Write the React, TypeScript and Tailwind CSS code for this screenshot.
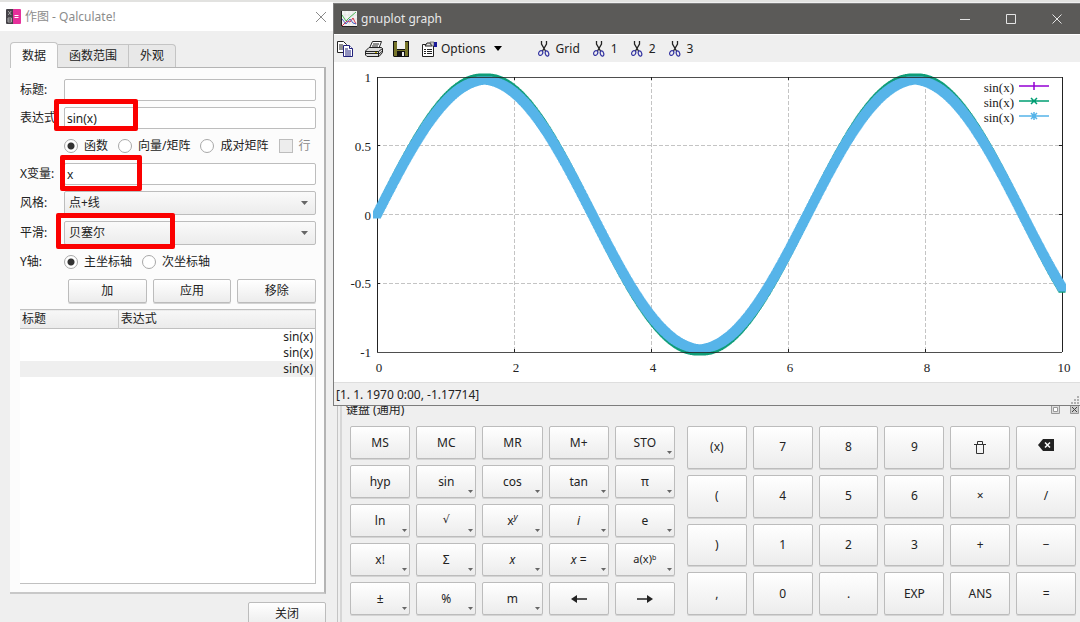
import clsx from 'clsx';
import { ReactNode } from 'react';

const keyClasses =
  'relative flex items-center justify-center rounded-xs border border-[#bcbcbc] bg-linear-to-b from-white to-[#ececec] text-xs text-[#222] shadow-[0_1px_0_#d4d4d4]';

export default function App() {
  return (
    <div className="grid h-screen grid-cols-[333px_minmax(0,1fr)] overflow-hidden border-t-2 border-[#e2e2e0] bg-[#efefef] font-['Noto_Sans','Noto_Sans_CJK_SC',sans-serif] text-xs text-[#222]">
      <PlotDialog />
      <div className="flex min-w-0 flex-col pt-px">
        <GnuplotWindow />
        <Keypad />
      </div>
    </div>
  );
}

/* ---------- plot dialog ---------- */

function PlotDialog() {
  return (
    <section className="flex min-h-0 flex-col">
      <header className="flex h-[29px] shrink-0 items-center gap-1 bg-white pl-1.5 pr-1.5 text-[#8c8c8c]">
        <QalculateLogo />
        <h1>作图 - Qalculate!</h1>
        <button aria-label="Close" className="ml-auto">
          <svg width="12" height="12" viewBox="0 0 12 12" stroke="#8a8a8a" fill="none">
            <path d="M1 1l10 10M11 1L1 11" />
          </svg>
        </button>
      </header>
      <div className="flex min-h-0 flex-1 flex-col pl-2.5 pr-[7px] pt-[11px]">
        <div className="z-10 flex items-end">
          <button className="-mb-px h-[26px] rounded-t-sm border border-b-0 border-[#c4c4c4] bg-[#fcfcfc] px-[11px]">
            数据
          </button>
          <button className="h-[23px] border border-b-0 border-l-0 border-[#c4c4c4] bg-[#e8e8e8] px-[11px]">
            函数范围
          </button>
          <button className="h-[23px] rounded-tr-sm border border-b-0 border-l-0 border-[#c4c4c4] bg-[#e8e8e8] px-[11px]">
            外观
          </button>
        </div>
        <form className="flex min-h-0 flex-1 flex-col gap-1.5 border-b-2 border-r-2 border-t border-b-[#c8c8c8] border-r-[#b4b4b4] border-t-[#b4b4b4] bg-[#fcfcfc] pb-2 pl-2.5 pr-2 pt-[11px]">
          <Field id="title" label="标题:">
            <TextInput id="title" value="" />
          </Field>
          <Field id="expression" label="表达式:">
            <TextInput id="expression" value="sin(x)" />
            <Highlight className="-left-2.5 -top-2 h-8 w-[84px]" />
          </Field>
          <div className="ml-11 flex h-[22px] items-center gap-2.5">
            <Choice name="kind" label="函数" checked />
            <Choice name="kind" label="向量/矩阵" />
            <Choice name="kind" label="成对矩阵" />
            <label className="flex items-center gap-1.5 text-[#8c8c8c]">
              <input
                type="checkbox"
                disabled
                className="size-3.5 appearance-none border border-[#bdbdbd] bg-[#ededed]"
              />
              行
            </label>
          </div>
          <Field id="variable" label="X变量:">
            <TextInput id="variable" value="x" />
            <Highlight className="-left-1 -top-2 h-9 w-[82px]" />
          </Field>
          <Field id="style" label="风格:">
            <Select id="style" value="点+线" />
          </Field>
          <Field id="smooth" label="平滑:">
            <Select id="smooth" value="贝塞尔" />
            <Highlight className="-left-2 -top-2 h-9 w-[119px]" />
          </Field>
          <div className="flex h-[22px] items-center">
            <span className="w-11">Y轴:</span>
            <div className="flex gap-2.5">
              <Choice name="axis" label="主坐标轴" checked />
              <Choice name="axis" label="次坐标轴" />
            </div>
          </div>
          <div className="ml-12 grid h-6 grid-cols-3 gap-1.5">
            <button type="button" className={keyClasses}>加</button>
            <button type="button" className={keyClasses}>应用</button>
            <button type="button" className={keyClasses}>移除</button>
          </div>
          <div className="min-h-0 flex-1 border-b border-r border-[#c0c0c0] bg-white">
            <table className="w-full border-collapse">
              <thead>
                <tr className="border-b border-t border-[#c0c0c0] bg-linear-to-b from-[#f7f7f7] to-[#ebebeb] text-left">
                  <th className="w-1/3 border-r border-[#c8c8c8] px-0.5 font-normal leading-[18px]">标题</th>
                  <th className="px-0.5 font-normal leading-[18px]">表达式</th>
                </tr>
              </thead>
              <tbody>
                {[0, 1, 2].map((i) => (
                  <tr key={i} className={clsx('text-right leading-4', i === 2 && 'bg-[#efefef]')}>
                    <td className="p-0" />
                    <td className="p-0 pr-0.5">sin(x)</td>
                  </tr>
                ))}
              </tbody>
            </table>
          </div>
        </form>
        <button className={clsx(keyClasses, '-mb-1 ml-auto mt-2 h-6 w-[78px] shrink-0')}>关闭</button>
      </div>
    </section>
  );
}

function Field({ id, label, children }: { id: string; label: string; children: ReactNode }) {
  return (
    <div className="flex items-center">
      <label htmlFor={id} className="w-11 shrink-0 whitespace-nowrap">
        {label}
      </label>
      <div className="relative flex min-w-0 flex-1">{children}</div>
    </div>
  );
}

function TextInput({ id, value }: { id: string; value: string }) {
  return (
    <input
      id={id}
      type="text"
      defaultValue={value}
      className="h-[22px] w-full rounded-xs border border-[#bdbdbd] bg-white px-0.5"
    />
  );
}

function Select({ id, value }: { id: string; value: string }) {
  return (
    <>
      <select
        id={id}
        className="h-6 w-full appearance-none rounded-xs border border-[#bdbdbd] bg-linear-to-b from-[#fafafa] to-[#ececec] px-1"
      >
        <option>{value}</option>
      </select>
      <svg className="pointer-events-none absolute right-2 top-2.5" width="7" height="4" viewBox="0 0 7 4">
        <path d="M0 0h7L3.5 4z" fill="#666" />
      </svg>
    </>
  );
}

function Choice({ name, label, checked }: { name: string; label: string; checked?: boolean }) {
  return (
    <label className="flex items-center gap-1.5 whitespace-nowrap">
      <input
        type="radio"
        name={name}
        defaultChecked={checked}
        className="size-3.5 appearance-none rounded-full border border-[#a8a8a8] bg-white checked:bg-[radial-gradient(circle,#333_3px,white_4px)]"
      />
      {label}
    </label>
  );
}

function Highlight({ className }: { className: string }) {
  return <div className={clsx('pointer-events-none absolute z-10 rounded-xs border-5 border-[#fb0000]', className)} />;
}

function QalculateLogo() {
  return (
    <svg width="15" height="15" viewBox="0 0 15 15" fill="none">
      <rect width="8" height="15" rx="1" fill="#454248" />
      <rect x="7" width="8" height="15" rx="1" fill="#e6309b" />
      <path d="M2.2 2l3 4M5.2 2l-3 4M2 9h3.500v4H2zM2 11h3.500" stroke="#bbb" strokeWidth=".8" />
      <path d="M8.500 6.500h4M8.500 8.500h4" stroke="#fff" />
    </svg>
  );
}

/* ---------- gnuplot window ---------- */

function GnuplotWindow() {
  return (
    <section className="relative z-10 border border-[#7d7d7d] border-r-0 bg-[#efefef]">
      <header className="flex h-[30px] items-center bg-[#5b5a58] pl-[7px] text-[#e8e8e8]">
        <GraphLogo />
        <h2 className="ml-1 flex-1">gnuplot graph</h2>
        <WindowButton label="Minimize" d="M0 5.500h10" />
        <WindowButton label="Maximize" d="M.5.500h9v9h-9z" />
        <WindowButton label="Close" d="M.5.500l9 9M9.500.500l-9 9" />
      </header>
      <div className="flex h-7 items-center border-t border-white pl-0.5">
        <button aria-label="Copy" className="mr-[11px]">
          <CopyIcon />
        </button>
        <button aria-label="Print" className="mr-2.5">
          <PrintIcon />
        </button>
        <button aria-label="Save" className="mr-3">
          <SaveIcon />
        </button>
        <button className="flex items-center gap-1">
          <OptionsIcon />
          <span className="mr-1">Options</span>
          <svg width="8" height="5" viewBox="0 0 8 5">
            <path d="M0 0h8L4 5z" fill="#000" />
          </svg>
        </button>
        <div className="ml-9 flex gap-[13px]">
          {['Grid', '1', '2', '3'].map((label) => (
            <button key={label} className="flex items-center gap-1.5">
              <ScissorsIcon />
              {label}
            </button>
          ))}
        </div>
      </div>
      <Chart />
      <footer className="relative h-[23px] border-t border-[#dedede] px-0.5 leading-[23px]">
        [1. 1. 1970 0:00, -1.17714]
        <svg className="absolute bottom-0 right-0" width="9" height="9" viewBox="0 0 9 9" fill="#b0b0b0">
          <path d="M6 0h2v2H6zM3 3h2v2H3zM6 3h2v2H6zM0 6h2v2H0zM3 6h2v2H3zM6 6h2v2H6z" />
        </svg>
      </footer>
    </section>
  );
}

function WindowButton({ label, d }: { label: string; d: string }) {
  return (
    <button aria-label={label} className="flex h-full w-[46px] items-center justify-center">
      <svg width="10" height="10" viewBox="0 0 10 10" fill="none" stroke="#e4e4e4">
        <path d={d} />
      </svg>
    </button>
  );
}

const LEFT = 43;
const TOP = 15;
const PLOT_WIDTH = 685;
const PLOT_HEIGHT = 275;

const toX = (x: number) => LEFT + (x / 10) * PLOT_WIDTH;
const toY = (y: number) => TOP + ((1 - y) / 2) * PLOT_HEIGHT;

// One square marker per sample, dense enough to read as a thick stroke
function markers(amplitude: number, size: number) {
  let d = '';
  for (let i = 0; i <= 1000; i++) {
    const x = i / 100;
    const left = toX(x) - size / 2;
    const top = toY(amplitude * Math.sin(x)) - size / 2;
    d += `M${left.toFixed(1)} ${top.toFixed(1)}h${size}v${size}h${-size}z`;
  }
  return d;
}

const GREEN_CURVE = markers(1, 7);
const BLUE_CURVE = markers(0.975, 8);

const LEGEND = [
  { color: '#9400d3', mark: 'M-4 0h8M0-4v8' },
  { color: '#009e73', mark: 'M-3-3l6 6M3-3l-6 6' },
  { color: '#56b4e9', mark: 'M-3-3l6 6M3-3l-6 6M-4 0h8M0-4v8' },
];

function Chart() {
  return (
    <svg
      viewBox="0 0 746 320"
      className="block h-auto w-full bg-white font-['Liberation_Serif',serif] text-[13px]"
      role="img"
      aria-label="sin(x)"
    >
      <g stroke="#c4c4c4" strokeDasharray="4 2" shapeRendering="crispEdges">
        {[2, 4, 6, 8].map((x) => (
          <line key={x} x1={toX(x)} x2={toX(x)} y1={TOP} y2={TOP + PLOT_HEIGHT} />
        ))}
        {[0.5, 0, -0.5].map((y) => (
          <line key={y} x1={LEFT} x2={LEFT + PLOT_WIDTH} y1={toY(y)} y2={toY(y)} />
        ))}
      </g>
      <g stroke="#222" shapeRendering="crispEdges">
        {[2, 4, 6, 8].map((x) => (
          <path key={x} d={`M${toX(x)} ${TOP}v3M${toX(x)} ${TOP + PLOT_HEIGHT}v-3`} />
        ))}
        {[0.5, 0, -0.5].map((y) => (
          <path key={y} d={`M${LEFT} ${toY(y)}h3M${LEFT + PLOT_WIDTH} ${toY(y)}h-3`} />
        ))}
        <path d={`M${LEFT} ${TOP}v${PLOT_HEIGHT}M${LEFT + PLOT_WIDTH} ${TOP}v${PLOT_HEIGHT}`} />
      </g>
      <path d={GREEN_CURVE} fill="#0f9d78" />
      <path d={BLUE_CURVE} fill="#56b4e9" />
      <path
        d={`M${LEFT} ${TOP}h${PLOT_WIDTH}M${LEFT} ${TOP + PLOT_HEIGHT}h${PLOT_WIDTH}`}
        stroke="#222"
        strokeOpacity=".8"
        shapeRendering="crispEdges"
      />
      <g fill="#222" textAnchor="end">
        {[1, 0.5, 0, -0.5, -1].map((y) => (
          <text key={y} x={LEFT - 6} y={toY(y) + 5}>
            {y}
          </text>
        ))}
      </g>
      <g fill="#222" textAnchor="middle">
        {[0, 2, 4, 6, 8, 10].map((x) => (
          <text key={x} x={toX(x) + 2} y="310">
            {x}
          </text>
        ))}
      </g>
      {LEGEND.map(({ color, mark }, i) => (
        <g key={color}>
          <text x="680" y={30 + i * 15} textAnchor="end" fill="#222">
            sin(x)
          </text>
          <g transform={`translate(700 ${24 + i * 15})`} stroke={color} strokeWidth="1.500">
            <path d={`M-15 0h30${mark}`} />
          </g>
        </g>
      ))}
    </svg>
  );
}

function GraphLogo() {
  return (
    <svg width="16" height="16" viewBox="0 0 16 16" fill="none">
      <rect width="16" height="16" fill="#f4f4f4" />
      <path d="M4 0v16M8 0v16M12 0v16M0 4h16M0 8h16M0 12h16" stroke="#ddd" strokeWidth=".6" />
      <path d="M1 4l4 6 3-3 7-6" stroke="#4cbb5a" />
      <path d="M1 15l5-5 3 1 3-4 3 6" stroke="#d8344c" />
      <path d="M1 8l4 5 4-5 3 4 3 1" stroke="#4a63c8" />
      <path d="M.5 0v15.500H16" stroke="#222" />
    </svg>
  );
}

function CopyIcon() {
  return (
    <svg width="18" height="18" viewBox="0 0 18 18" fill="#fff">
      <path d="M1.500 1.500h6l3 3v8h-9z" stroke="#222" />
      <path d="M3 5h4M3 7h5M3 9h5" stroke="#222" />
      <path d="M7.500 5.500h6l3 3v8h-9z" stroke="#22227c" />
      <path d="M13.500 5.500v3h3M9 9h3M9 11h6M9 13h6M9 15h6" stroke="#22227c" />
    </svg>
  );
}

function PrintIcon() {
  return (
    <svg width="18" height="18" viewBox="0 0 18 18" fill="#fff" stroke="#222" strokeLinejoin="round">
      <path d="M4.500 8L7.500 1.500h9L14 8z" />
      <path d="M8 4h6M7 6h6" />
      <path d="M.5 11L4 7.500h12.500l1 1v4L14 16.500H2L.5 15z" fill="#ddd" />
      <path d="M.5 11.500h13l4-3M1 13.500h13M13.500 11.500v5M14 14l3.500-3" fill="none" />
      <path d="M10 12.500h2" stroke="#b8a800" />
    </svg>
  );
}

function SaveIcon() {
  return (
    <svg width="16" height="16" viewBox="0 0 16 16">
      <path d="M0 0h16v16H1l-1-1z" fill="#111" />
      <path d="M1 1h3v8h8V1h3v14H1z" fill="#77752a" />
      <path d="M4 0h8v8H4z" fill="#f2f2f2" />
      <path d="M4 10h8v6H4z" fill="#111" />
      <path d="M9 11h2v4H9z" fill="#eee" />
    </svg>
  );
}

function OptionsIcon() {
  return (
    <svg width="16" height="16" viewBox="0 0 16 16" fill="none">
      <path d="M1.500 3.500h11v12h-11z" fill="#fff" stroke="#222" />
      <path d="M4 5l2-3h3l2 3z" fill="#ddd" stroke="#222" />
      <path d="M3 8.500h2M6 8.500h5M3 10.500h2M6 10.500h5M3 12.500h2M6 12.500h5" stroke="#222" />
      <path d="M9 1h4v4h-2z" fill="#ccc" stroke="#444" strokeWidth=".6" />
      <path d="M13 1h3v5h-3z" fill="#1c1c9c" />
    </svg>
  );
}

function ScissorsIcon() {
  return (
    <svg width="12" height="16" viewBox="0 0 12 16" fill="none">
      <path d="M3.500 0v3l4 7M8.500 0v3l-4 7" stroke="#222" strokeWidth="1.300" />
      <ellipse cx="2.700" cy="12" rx="1.900" ry="2.500" transform="rotate(30 2.700 12)" stroke="#3030a0" strokeWidth="1.200" />
      <ellipse cx="9" cy="12.500" rx="1.700" ry="2.700" transform="rotate(-15 9 12.500)" stroke="#3030a0" strokeWidth="1.200" />
    </svg>
  );
}

/* ---------- keypad ---------- */

type Key = { label: ReactNode; name?: string; menu?: boolean };

const FUNCTION_KEYS: Key[] = [
  { label: 'MS' },
  { label: 'MC' },
  { label: 'MR' },
  { label: 'M+' },
  { label: 'STO', menu: true },
  { label: 'hyp' },
  { label: 'sin', menu: true },
  { label: 'cos', menu: true },
  { label: 'tan', menu: true },
  { label: 'π', menu: true },
  { label: 'ln', menu: true },
  { label: <span className="font-['DejaVu_Sans',sans-serif] text-[11px]">√</span>, menu: true },
  { label: <span>x<sup className="text-[9px] italic">y</sup></span>, menu: true },
  { label: <i>i</i>, menu: true },
  { label: 'e', menu: true },
  { label: 'x!', menu: true },
  { label: 'Σ', menu: true },
  { label: <i>x</i>, menu: true },
  { label: <span><i>x</i> =</span>, menu: true },
  { label: <span className="text-[11px]">a(x)<sup className="text-[7px]">b</sup></span>, menu: true },
  { label: '±', menu: true },
  { label: '%', menu: true },
  { label: 'm', menu: true },
  { label: <ArrowIcon />, name: 'Left' },
  { label: <ArrowIcon className="rotate-180" />, name: 'Right' },
];

const NUMBER_KEYS: Key[] = [
  ...['(x)', '7', '8', '9'].map((label) => ({ label })),
  { label: <TrashIcon />, name: 'Clear' },
  { label: <BackspaceIcon />, name: 'Backspace' },
  ...['(', '4', '5', '6', '×', '/'].map((label) => ({ label })),
  ...[')', '1', '2', '3', '+', '−'].map((label) => ({ label })),
  ...[',', '0', '.', 'EXP', 'ANS', '='].map((label) => ({ label })),
];

function Keypad() {
  return (
    <section className="ml-1 flex-1 border-l border-[#c4c4c4] pl-0.5">
      <div className="h-full border-l-2 border-[#d6d6d6] pl-2 pr-1">
        <header className="-ml-1 -mr-1 flex h-3 items-end justify-between pr-px">
          <h2 className="leading-4">键盘 (通用)</h2>
          <div className="flex gap-2.5 pb-1">
            <button aria-label="Float">
              <svg width="9" height="9" viewBox="0 0 9 9" fill="#ddd" stroke="#999">
                <path d="M.5.500h8v8h-8z" />
                <path d="M2.500 2.500h4v4h-4z" fill="#fff" />
              </svg>
            </button>
            <button aria-label="Close keypad">
              <svg width="9" height="9" viewBox="0 0 9 9" fill="#ccc">
                <path d="M.5.500h8v8h-8z" stroke="#999" />
                <path d="M2 2l5 5M7 2L2 7" stroke="#444" />
              </svg>
            </button>
          </div>
        </header>
        <div className="mt-2 grid h-[189px] grid-cols-[324fr_388fr] gap-3">
          <div className="grid grid-cols-5 grid-rows-5 gap-1.5">
            {FUNCTION_KEYS.map((key, i) => (
              <KeyButton key={i} {...key} />
            ))}
          </div>
          <div className="grid grid-cols-6 grid-rows-4 gap-1.5">
            {NUMBER_KEYS.map((key, i) => (
              <KeyButton key={i} {...key} />
            ))}
          </div>
        </div>
      </div>
    </section>
  );
}

function KeyButton({ label, name, menu }: Key) {
  return (
    <button aria-label={name} className={keyClasses}>
      {label}
      {menu && (
        <svg className="absolute bottom-1 right-0.5" width="5" height="3" viewBox="0 0 5 3">
          <path d="M0 0h5L2.500 3z" fill="#666" />
        </svg>
      )}
    </button>
  );
}

function ArrowIcon({ className }: { className?: string }) {
  return (
    <svg className={className} width="16" height="8" viewBox="0 0 16 8">
      <path d="M0 4l6-4v3.200h10v1.600H6V8z" fill="#222" />
    </svg>
  );
}

function TrashIcon() {
  return (
    <svg width="12" height="13" viewBox="0 0 12 13" fill="none" stroke="#333">
      <path d="M0 3.500h12M3.500 3V.500h5V3M2.500 3.500v9h7v-9" />
    </svg>
  );
}

function BackspaceIcon() {
  return (
    <svg width="16" height="12" viewBox="0 0 16 12" className="mb-1">
      <path d="M0 6l5-6h11v12H5z" fill="#222" />
      <path d="M7 3.500l5 5M12 3.500l-5 5" stroke="#fff" strokeWidth="1.500" />
    </svg>
  );
}
